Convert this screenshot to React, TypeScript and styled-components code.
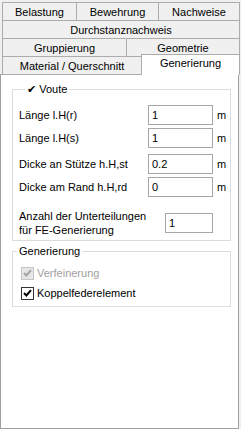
import styled, { createGlobalStyle } from "styled-components";

const GlobalStyle = createGlobalStyle`
   html, body {
      margin: 0;
      padding: 0;
      background: #f0f0f0;
   }
   body {
      font-family: "Liberation Sans", Arial, sans-serif;
      font-size: 11px;
      color: #000;
   }
`;

interface Tab {
   label: string;
   width: number;
   selected?: boolean;
}

const tabRows: Tab[][] = [
   [
      { label: "Belastung", width: 75 },
      { label: "Bewehrung", width: 83 },
      { label: "Nachweise", width: 82 },
   ],
   [{ label: "Durchstanznachweis", width: 238 }],
   [
      { label: "Gruppierung", width: 125 },
      { label: "Geometrie", width: 114 },
   ],
   [
      { label: "Material / Querschnitt", width: 140 },
      { label: "Generierung", width: 99, selected: true },
   ],
];

interface FieldRow {
   label: string;
   value: string;
   gap: number;
}

const vouteRows: FieldRow[] = [
   { label: "Länge l.H(r)", value: "1", gap: 0 },
   { label: "Länge l.H(s)", value: "1", gap: 3 },
   { label: "Dicke an Stütze h.H,st", value: "0.2", gap: 6 },
   { label: "Dicke am Rand h.H,rd", value: "0", gap: 3 },
];

const Check = ({ color }: { color: string }) => (
   <svg width="9" height="8" viewBox="0 0 9 8">
      <path d="M1 4 L3.4 6.5 L8 1.2" fill="none" stroke={color} strokeWidth="2" />
   </svg>
);

const App = () => {
   return (
      <Root>
         <GlobalStyle />
         <TabStrip>
            {tabRows.map((row, i) => (
               <TabRow key={i} $last={i === tabRows.length - 1}>
                  {row.map((t) => (
                     <TabButton key={t.label} $width={t.width} $selected={!!t.selected}>
                        {t.label}
                     </TabButton>
                  ))}
               </TabRow>
            ))}
         </TabStrip>
         <Panel>
            <Group $indent={12}>
               <Legend>
                  <LegendCheck>✔</LegendCheck>Voute
               </Legend>
               <Fields>
                  {vouteRows.map((r) => (
                     <Row key={r.label} $gap={r.gap}>
                        <Label>{r.label}</Label>
                        <Input defaultValue={r.value} />
                        <Unit>m</Unit>
                     </Row>
                  ))}
                  <DivRow>
                     <Label>
                        Anzahl der Unterteilungen
                        <br />
                        für FE-Generierung
                     </Label>
                     <SmallInput defaultValue="1" />
                  </DivRow>
               </Fields>
            </Group>
            <Group $indent={4} $top={3}>
               <Legend>Generierung</Legend>
               <Checks>
                  <CheckRow $disabled>
                     <Box $disabled>
                        <Check color="#a3a3a3" />
                     </Box>
                     Verfeinerung
                  </CheckRow>
                  <CheckRow>
                     <Box>
                        <Check color="#000" />
                     </Box>
                     Koppelfederelement
                  </CheckRow>
               </Checks>
            </Group>
         </Panel>
      </Root>
   );
};

export default App;

const Root = styled.div`
   width: 241px;
   height: 429px;
   display: flex;
   flex-direction: column;
   background: #f0f0f0;
`;

const TabStrip = styled.div`
   display: flex;
   flex-direction: column;
   padding: 2px 0 0 2px;
`;

const TabRow = styled.div<{ $last: boolean }>`
   display: flex;
   height: 19px;
   margin-bottom: -1px;
   align-items: flex-start;
   ${(p) => (p.$last ? "position: relative; z-index: 1;" : "")}
`;

const TabButton = styled.div<{ $width: number; $selected: boolean }>`
   box-sizing: border-box;
   width: ${(p) => p.$width}px;
   height: ${(p) => (p.$selected ? 21 : 19)}px;
   margin-top: ${(p) => (p.$selected ? -2 : 0)}px;
   margin-left: -1px;
   &:first-child {
      margin-left: 0;
   }
   border: 1px solid #acacac;
   border-bottom: ${(p) => (p.$selected ? "none" : "1px solid #acacac")};
   background: ${(p) => (p.$selected ? "#fff" : "#f0f0f0")};
   display: flex;
   justify-content: center;
   align-items: ${(p) => (p.$selected ? "flex-start" : "center")};
   padding-top: ${(p) => (p.$selected ? 2 : 0)}px;
   white-space: nowrap;
   position: relative;
   z-index: ${(p) => (p.$selected ? 2 : 0)};
`;

const Panel = styled.div`
   box-sizing: border-box;
   width: 239px;
   height: 355px;
   background: #fff;
   border: 1px solid #a0a0a0;
   padding: 7px 7px 0 11px;
   display: flex;
   flex-direction: column;
`;

/* the legend sits at the start of the fieldset's padding box */
const Group = styled.fieldset<{ $top?: number; $indent: number }>`
   margin: ${(p) => p.$top || 0}px 0 0 0;
   padding: 0 0 0 ${(p) => p.$indent}px;
   border: 1px solid #dcdcdc;
   min-width: 0;
   & > div {
      margin-left: ${(p) => -p.$indent}px;
   }
`;

const Legend = styled.legend`
   padding: 0 2px;
   line-height: 14px;
`;

const LegendCheck = styled.span`
   font-family: "DejaVu Sans", sans-serif;
   font-size: 11px;
   margin-right: 3px;
`;

const Fields = styled.div`
   display: flex;
   flex-direction: column;
   padding: 8px 0 3px 6px;
`;

const Row = styled.div<{ $gap: number }>`
   display: flex;
   align-items: center;
   margin-top: ${(p) => p.$gap}px;
   height: 20px;
`;

const DivRow = styled.div`
   display: flex;
   align-items: center;
   margin-top: 12px;
   height: 28px;
`;

const Label = styled.div`
   width: 129px;
   line-height: 14px;
   white-space: nowrap;
`;

const Input = styled.input`
   box-sizing: border-box;
   width: 65px;
   height: 20px;
   border: 1px solid #a6a6a6;
   padding: 0 3px;
   font: inherit;
   color: #000;
   outline: none;
`;

const SmallInput = styled(Input)`
   width: 48px;
   margin-left: 17px;
`;

const Unit = styled.div`
   margin-left: 4px;
`;

const Checks = styled.div`
   display: flex;
   flex-direction: column;
   padding: 5px 0 3px 8px;
`;

const CheckRow = styled.div<{ $disabled?: boolean }>`
   display: flex;
   align-items: center;
   height: 20px;
   color: ${(p) => (p.$disabled ? "#a0a0a0" : "#000")};
`;

const Box = styled.span<{ $disabled?: boolean }>`
   box-sizing: border-box;
   width: 13px;
   height: 13px;
   margin-right: 3px;
   border: 1px solid ${(p) => (p.$disabled ? "#c4c4c4" : "#333")};
   background: ${(p) => (p.$disabled ? "#e6e6e6" : "#fff")};
   display: flex;
   align-items: center;
   justify-content: center;
`;
